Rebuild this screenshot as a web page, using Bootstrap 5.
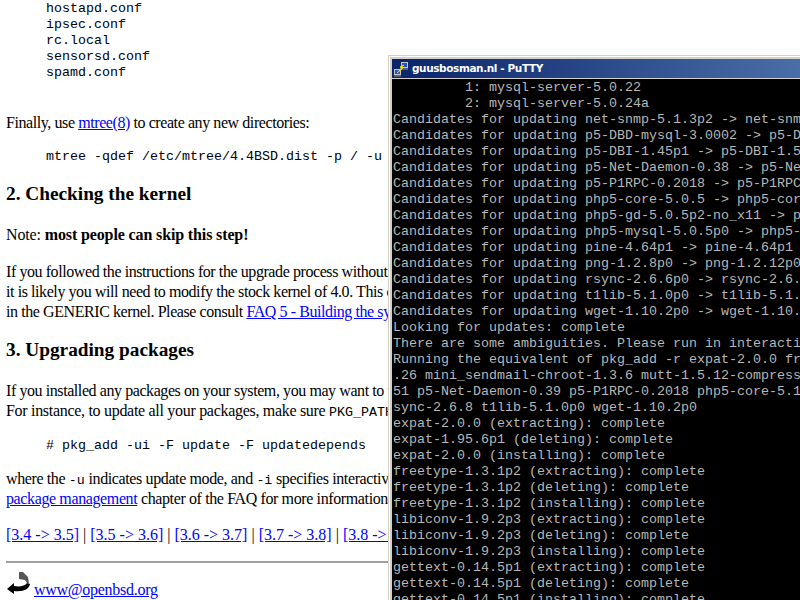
<!DOCTYPE html>
<html lang="en">
<head>
<meta charset="utf-8">
<title>OpenBSD upgrade</title>
<link rel="stylesheet" href="https://cdn.jsdelivr.net/npm/bootstrap@5.3.0/dist/css/bootstrap.min.css">
<style>
html, body { height: 100%; overflow: hidden; }
body { background: #fff; color: #000; font-family: "Liberation Serif", "Times New Roman", serif; font-size: 16px; line-height: 20px; position: relative; }
a { color: #00f; text-decoration: underline; }
.doc-page { padding: 1px 6px 0; white-space: nowrap; overflow: hidden; height: 600px; }
.doc-text { margin: 0 0 16px; letter-spacing: -.42px; }
.doc-note { letter-spacing: -.13px; margin-bottom: 17px; }
.doc-loose { letter-spacing: -.3px; }
.doc-mid { letter-spacing: -.38px; }
.doc-links { letter-spacing: 0; }
.doc-before-cmd { margin-bottom: 17px; }
.doc-code { font-family: "Liberation Mono", "Courier New", monospace; font-size: 13.33px; line-height: 16px; margin: 0 0 16px; padding-left: 40px; overflow: visible; color: #000; letter-spacing: 0; }
.doc-cmd-tight { margin-bottom: 15px; }
.doc-files { margin-bottom: 32px; }
.doc-head { font-family: inherit; font-weight: 700; font-size: 19.3px; line-height: 22px; margin: 18px 0 20px; }
.doc-head-next { margin-top: 17px; }
.doc-tt { font-family: "Liberation Mono", "Courier New", monospace; font-size: 13.33px; line-height: 1; color: #000; letter-spacing: 0; }
.doc-rule { border: 0; border-top: 2px solid #a0a0a0; opacity: 1; margin: 16px 0 8px; }
.doc-foot { display: flex; align-items: flex-end; gap: 4px; letter-spacing: -.27px; }
.doc-foot svg { display: block; margin-bottom: 5px; }
.putty-win { position: absolute; left: 388px; top: 55px; width: 412px; height: 545px; background: #d4d0c8; border-top: 1px solid #d4d0c8; border-left: 1px solid #d4d0c8; box-shadow: inset 1px 1px 0 #fff; padding: 3px 0 0 3px; overflow: hidden; }
.putty-title { height: 19px; background: linear-gradient(90deg, #0a246a 0%, #4a6ea8 100%); color: #fff; font-family: "DejaVu Sans", Verdana, sans-serif; font-weight: 700; font-size: 10.5px; letter-spacing: -.4px; line-height: 19px; display: flex; align-items: center; gap: 3px; padding-left: 1px; }
.putty-term { background: #000; color: #b8b8b8; font-family: "Liberation Mono", "Courier New", monospace; font-size: 13.33px; line-height: 16px; margin: 1px 0 0; padding: 1px 0 0 1px; height: 530px; overflow: hidden; white-space: pre; }
</style>
</head>
<body>
<div class="doc-page">
<pre class="doc-code doc-files">hostapd.conf
ipsec.conf
rc.local
sensorsd.conf
spamd.conf</pre>
<p class="doc-text">Finally, use <a href="#">mtree(8)</a> to create any new directories:</p>
<pre class="doc-code">mtree -qdef /etc/mtree/4.4BSD.dist -p / -u</pre>
<h3 class="doc-head">2. Checking the kernel</h3>
<p class="doc-text doc-note">Note: <strong>most people can skip this step!</strong></p>
<p class="doc-text">If you followed the instructions for the upgrade process without<br>
it is likely you will need to modify the stock kernel of 4.0. This c<br>
in the GENERIC kernel. Please consult <a href="#">FAQ 5 - Building the system</a></p>
<h3 class="doc-head doc-head-next">3. Upgrading packages</h3>
<p class="doc-text doc-before-cmd">If you installed any packages on your system, you may want to update<br>
<span class="doc-loose">For instance, to update all your packages, make sure </span><span class="doc-tt">PKG_PATH</span></p>
<pre class="doc-code doc-cmd-tight"># pkg_add -ui -F update -F updatedepends</pre>
<p class="doc-text doc-mid">where the <span class="doc-tt">-u</span> indicates update mode, and <span class="doc-tt">-i</span> specifies interactive<br>
<a href="#">package management</a> chapter of the FAQ for more information.</p>
<p class="doc-text doc-links"><a href="#">[3.4 -&gt; 3.5]</a> | <a href="#">[3.5 -&gt; 3.6]</a> | <a href="#">[3.6 -&gt; 3.7]</a> | <a href="#">[3.7 -&gt; 3.8]</a> | <a href="#">[3.8 -&gt; 3.9]</a></p>
<hr class="doc-rule">
<div class="doc-foot">
<svg width="24" height="24" viewBox="0 0 24 24"><path fill="#000" d="M1 18 8 12v3c6 1 11 0 13-3l3 1c-1 5-6 8-16 7v3z"/><path fill="#555" d="M13 1h4l5 5 1 7-2-1-2-3-6-1z"/></svg>
<a href="#">www@openbsd.org</a>
</div>
</div>
<div class="putty-win">
<div class="putty-title">
<svg width="16" height="16" viewBox="0 0 16 16"><rect x="8.5" y="1.5" width="6" height="5" fill="#2a50c0" stroke="#c8c8c8"/><path d="M8 8h7" stroke="#9a9a9a"/><rect x="1.5" y="8.500" width="6" height="5" fill="#2a50c0" stroke="#c8c8c8"/><path d="M1 15h7" stroke="#9a9a9a"/><path d="M11 4 8 6.500l1.500 1L4 12l4.500-5-1.500-1z" fill="#ff0" stroke="#e8d800"/></svg>
<span>guusbosman.nl - PuTTY</span>
</div>
<div class="putty-term">         1: mysql-server-5.0.22
         2: mysql-server-5.0.24a
Candidates for updating net-snmp-5.1.3p2 -> net-snmp-5.3.0
Candidates for updating p5-DBD-mysql-3.0002 -> p5-DBD-mysql
Candidates for updating p5-DBI-1.45p1 -> p5-DBI-1.50p0
Candidates for updating p5-Net-Daemon-0.38 -> p5-Net-Daemon
Candidates for updating p5-P1RPC-0.2018 -> p5-P1RPC-0.2018
Candidates for updating php5-core-5.0.5 -> php5-core-5.1.4
Candidates for updating php5-gd-5.0.5p2-no_x11 -> php5-gd
Candidates for updating php5-mysql-5.0.5p0 -> php5-mysql
Candidates for updating pine-4.64p1 -> pine-4.64p1
Candidates for updating png-1.2.8p0 -> png-1.2.12p0
Candidates for updating rsync-2.6.6p0 -> rsync-2.6.8
Candidates for updating t1lib-5.1.0p0 -> t1lib-5.1.0p0
Candidates for updating wget-1.10.2p0 -> wget-1.10.2p0
Looking for updates: complete
There are some ambiguities. Please run in interactive mode
Running the equivalent of pkg_add -r expat-2.0.0 freetype
.26 mini_sendmail-chroot-1.3.6 mutt-1.5.12-compressed
51 p5-Net-Daemon-0.39 p5-P1RPC-0.2018 php5-core-5.1.4
sync-2.6.8 t1lib-5.1.0p0 wget-1.10.2p0
expat-2.0.0 (extracting): complete
expat-1.95.6p1 (deleting): complete
expat-2.0.0 (installing): complete
freetype-1.3.1p2 (extracting): complete
freetype-1.3.1p2 (deleting): complete
freetype-1.3.1p2 (installing): complete
libiconv-1.9.2p3 (extracting): complete
libiconv-1.9.2p3 (deleting): complete
libiconv-1.9.2p3 (installing): complete
gettext-0.14.5p1 (extracting): complete
gettext-0.14.5p1 (deleting): complete
gettext-0.14.5p1 (installing): complete</div>
</div>
<script src="https://cdn.jsdelivr.net/npm/bootstrap@5.3.0/dist/js/bootstrap.bundle.min.js"></script>
</body>
</html>
